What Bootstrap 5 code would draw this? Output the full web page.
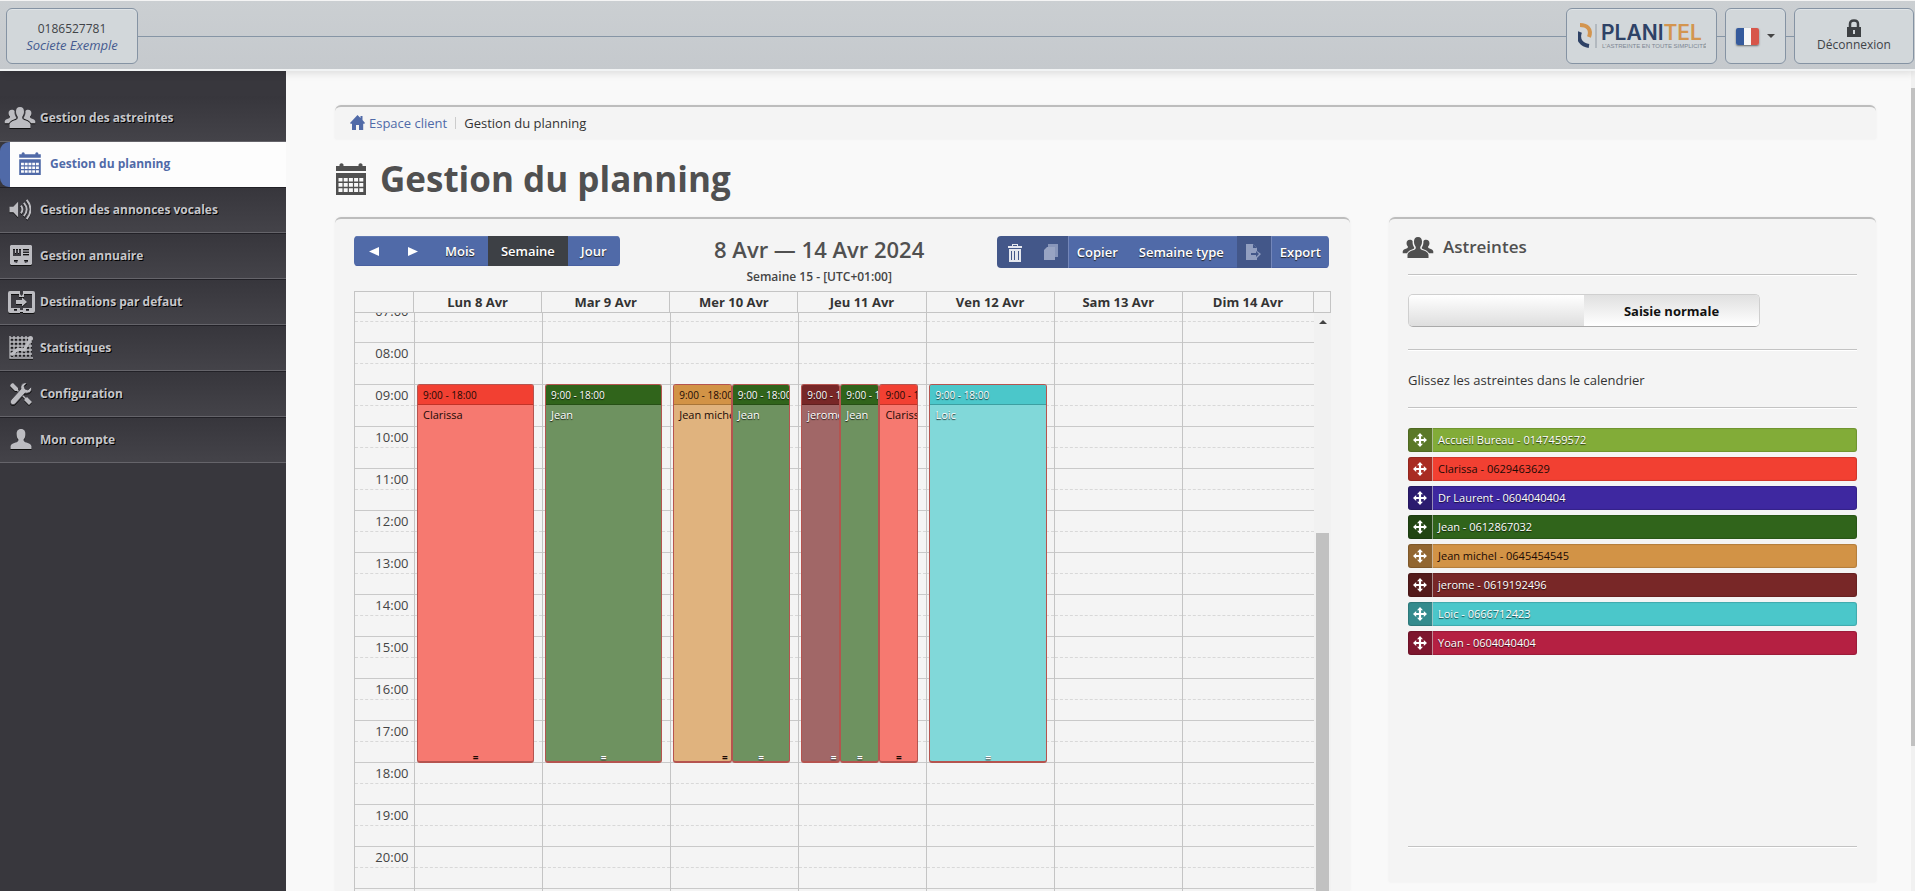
<!DOCTYPE html>
<html lang="fr">
<head>
<meta charset="utf-8">
<meta name="viewport" content="width=device-width, initial-scale=1">
<title>Gestion du planning</title>
<link href="https://cdn.jsdelivr.net/npm/bootstrap@5.3.0/dist/css/bootstrap.min.css" rel="stylesheet">
<style>
:root{--blue:#506aa8;--ink:#505050;--rule:#cbcbcb}
body{font-family:"Open Sans","Noto Sans",sans-serif;font-size:13px;line-height:20px;color:#333;background:#f9f9f9}
a{text-decoration:none}
.topbar{height:71px;padding:8px 1px 6px 6px;background:linear-gradient(#cbcfd2,#c5c9cd);border-top:1px solid #f4f4f4;border-bottom:2px solid #f1f3f4;box-shadow:0 2px 8px rgba(0,0,0,.12);z-index:2}
.topbar .wire{height:1px;background:#8695a5}
.topbar .gap-wire{width:8px}
.plate{height:56px;border:1px solid #8593a3;border-radius:6px;background:#d2d7da;color:#404347;box-shadow:inset 0 1px 0 #dfe4e7}
.plate-account{width:132px;font-size:12px;line-height:17px;padding-top:1px}
.plate-account em{color:#455b90;font-size:13px}
.plate-logo{width:151px}
.plate-flag{width:61px}
.plate-exit{width:120px;font-size:12px;line-height:16px}
.flag{width:23px;height:17px;border-radius:2px;box-shadow:0 1px 2px rgba(0,0,0,.5)}
.side{width:286px;background:#38373d;padding-top:25px}
.side .nav-link{height:46px;padding:0 0 0 4px;gap:3px;color:#c6c6ca;font-size:12px;font-weight:700;text-shadow:1px 1px 0 #000;background:linear-gradient(#37363c,#444349);border-top:1px solid #222127;border-bottom:1px solid #65646a;border-radius:0}
.side .nav-link svg{width:33px;height:26px;fill:#bcbcc1;filter:drop-shadow(0 1px 0 #111)}
.side li:first-child .nav-link{border-top:0;padding-bottom:2px}
.side .nav-link.active{height:45px;color:var(--blue);text-shadow:none;border:0;padding:0 0 1px 14px;background:linear-gradient(90deg,transparent 10px,#fdfdfd 10px),#38373d;position:relative}
.side .nav-link.active::before{content:"";position:absolute;left:0;top:0;width:10px;height:100%;background:#506aa8;border-radius:9px 0 0 9px}
.side .nav-link.active svg{fill:var(--blue);filter:none}
.content{padding:34px 39px 0 49px;min-width:0}
.box{background:#f4f4f4;border-top:2px solid #bdbdbd;border-radius:6px 6px 0 0;box-shadow:0 0 3px rgba(0,0,0,.05)}
.crumbs{height:34px;padding:0 15px 1px}
.crumbs a{color:var(--blue)}
.crumbs .sep{width:1px;height:12px;background:#ccc;margin:0 8px}
h1{font-size:35px;line-height:48px;font-weight:700;color:var(--ink);margin:0}
.pagehead{padding:2px 0 0 1px;gap:14px;height:78px}
.columns{display:grid;grid-template-columns:minmax(0,1015fr) minmax(0,487fr);gap:39px;min-height:0}
.cal{padding:17px 19px 0;min-height:0}
.tools{height:55px;padding-right:2px}
.tools .btn-group{gap:1px;background:#fff;border-radius:4px;overflow:hidden}
.tools .btn-group>.btn{flex:none;margin:0;height:30px;padding:0 13px;border:0;border-radius:0;background:var(--blue);color:#fff;line-height:20px;text-shadow:0 1px 1px #222;box-shadow:inset 0 1px 0 #6179b2,inset 0 -1px 0 #4960a0;font-size:13px;font-weight:600}
.tools .btn-group>.arrow{width:39px;padding:0 0 2px}
.tools .btn-group>.btn.active{background:#3d4045;box-shadow:none}
.tools .tall>.btn{height:32px}
.tools .tall>.with-icon{padding:0 8px 0 0;overflow:hidden}
.tools .glyph{width:35px;height:32px;background:#435789;border-right:1px solid #7386b9;margin-right:8px;display:flex;align-items:center;justify-content:center}
.tools .tall>.trash{padding:0;width:37px;background:#435789;box-shadow:none}
.headline{padding-left:22px}
.week{font-size:22px;line-height:24px;font-weight:600;color:var(--ink);margin:1px 0 9px}
.weekno{font-size:12px;line-height:14px;font-weight:600;color:#444}
.grid-head,.slots{table-layout:fixed;width:100%;border-collapse:collapse}
.grid-head{border:1px solid #c4c4c4}
.grid-head th{height:21px;font-size:13px;line-height:18px;font-weight:700;text-align:center;padding:0;border:1px solid #c4c4c4;color:#333}
.c-time{width:59px}
.c-day{width:13.36%}
.c-headday{width:13.13%}
.c-bar{width:17px}
.grid-body{min-height:0;flex:1 1 0}
.scroller{overflow:hidden;border-left:1px solid #c4c4c4}
.track{position:relative;margin-top:-13px}
.slots td,.slots th{height:21px;padding:0;border-right:1px solid #c4c4c4;border-top:1px solid #c9c9c9;line-height:20px;font-weight:400;font-size:13px;color:#444}
.slots tr.half>*{border-top:1px dashed #d8d8d8}
.slots th{text-align:right;padding-right:5px}
.slots tr>:last-child{border-right:0}
.events{position:absolute;inset:0 0 auto 0;display:grid;grid-template-columns:59px repeat(6,13.36%) 1fr;padding-top:84px}
.day{display:flex;padding:0 8px 0 3px;min-width:0}
.event{flex:1 1 0;min-width:0;height:379px;border:1px solid #b5544f;border-bottom-width:2px;border-radius:3px;background:var(--soft);color:#fff;font-size:11px;line-height:16px;text-shadow:0 1px 1px rgba(0,0,0,.8);white-space:nowrap;overflow:hidden}
.event header{background:var(--c);height:20px;font-size:10px;line-height:21px;padding-left:5px;border-bottom:1px solid rgba(0,0,0,.2);overflow:hidden}
.event p{margin:2px 0 0;padding-left:5px;overflow:hidden}
.event .grip{margin-top:auto;text-align:center;font-size:10px;line-height:8px;font-weight:700}
.event.under .grip{text-align:right;padding-right:3px}
.dark-ink,.event.dark-ink{color:#1a0a05;text-shadow:none}
.green{--c:#30641b;--soft:#6e9260}
.red{--c:#f24032;--soft:#f67970}
.sand{--c:#d29346;--soft:#e0b37e}
.maroon{--c:#782727;--soft:#a16767}
.cyan{--c:#4bc7ca;--soft:#81d8d9}
.lime{--c:#82ac38}
.violet{--c:#3e28a0}
.crimson{--c:#b52042}
.inner-bar{width:17px;padding:7px 2px 0 2px;background:#f1f1f1}
.inner-bar .up{border:4px solid transparent;border-top:0;border-bottom-color:#444;margin:0 auto}
.inner-bar .thumb{background:#c1c1c1;margin-top:209px}
.oncall{padding:15px 19px 34px;height:665px}
.oncall-title{gap:9px;padding-bottom:14px;margin-left:-6px}
.oncall h2{font-size:17px;line-height:26px;font-weight:600;color:var(--ink);margin:0}
.oncall hr{margin:0;border:0;border-top:1px solid #c3c3c3;border-bottom:1px solid #fff;opacity:1;flex:none}
.oncall .hint{padding:19px 0 17px;margin:0}
.switch{width:352px;height:33px;border:1px solid #cfcfcf;border-bottom-color:#aaa;border-radius:5px;overflow:hidden;margin:18px 0 22px;max-width:100%}
.switch label{flex:1;font-weight:700;line-height:32px;text-align:center;color:#111;background:linear-gradient(#fff,#dedede)}
.switch input:checked+label{background:linear-gradient(#e0e0e0,#fff)}
.people{padding-top:19px}
.people li{height:24px;margin-bottom:5px;border-radius:3px;background:var(--c);color:#fff;font-size:11px;line-height:23px;text-shadow:0 1px 1px rgba(0,0,0,.7);box-shadow:inset 0 0 1px 1px rgba(0,0,0,.15);overflow:hidden}
.people li.dark-ink{color:#1a0a05;text-shadow:none}
.people .handle{width:25px;background:rgba(0,0,0,.3);border-right:1px solid rgba(255,255,255,.5);margin-right:5px}
.page-bar{width:4px;background:#f1f1f1;position:absolute;right:0;top:71px;bottom:0;padding-top:17px}
.page-bar div{height:82%;background:#c1c1c1}
</style>
</head>
<body class="vh-100 overflow-hidden d-flex flex-column position-relative">
<svg class="d-none" aria-hidden="true">
  <symbol id="i-group" viewBox="0 0 32 22"><path d="M16 0c3 0 4.300 2 4.200 5 0 2.600-1 4-1.700 5.200-.5 1.300 0 2.400 1.500 3.100 3 1.300 6.500 2 7 5.200V22H5v-3.500c.5-3.200 4-3.900 7-5.200 1.500-.7 2-1.800 1.500-3.100C12.800 9 11.800 7.600 11.800 5c-.1-3 1.200-5 4.200-5z"/><path d="M7.500 3c1.200 0 2.300.4 2.800 1.300-.1 3 .5 5 1.700 6.600.2.800-.1 1.300-1 1.700-2.600 1-5 2-6.600 4.300L0 17v-2c.5-2 3-2.500 4.600-3.200.9-.5 1.100-1.300.6-2C4.600 9 4 8 4 6.500 4 4.500 5.200 3 7.500 3zM24.500 3c-1.200 0-2.300.4-2.800 1.300.1 3-.5 5-1.700 6.600-.2.800.1 1.300 1 1.700 2.600 1 5 2 6.600 4.300L32 17v-2c-.5-2-3-2.500-4.600-3.200-.9-.5-1.100-1.300-.6-2 .6-.8 1.200-1.800 1.200-3.300 0-2-1.200-3.500-3.500-3.500z"/></symbol>
  <symbol id="i-cal" viewBox="0 0 30 32"><path d="M0 3h3.500V1.500Q5.500-1 7.500 1.500V3h15V1.500q2-2.500 4 0V3H30v5H0zM0 10h30v22H0zM2.500 15v3.500h4V15zm5.200 0v3.500h4V15zm5.200 0v3.500h4V15zm5.200 0v3.500h4V15zm5.200 0v3.500h4V15zM2.500 20v3.800h4V20zm5.200 0v3.800h4V20zm5.200 0v3.800h4V20zm5.200 0v3.800h4V20zm5.200 0v3.800h4V20zM2.500 25.300V29h4v-3.700zm5.200 0V29h4v-3.700zm5.200 0V29h4v-3.700zm5.200 0V29h4v-3.700zm5.200 0V29h4v-3.700z" fill-rule="evenodd"/></symbol>
  <symbol id="i-sound" viewBox="0 0 22 22"><path d="M0 8h4l5-5v16l-5-5H0z"/><path d="M12 7q3 4 0 8M15 4q6 7 0 14M18 1q8 10 0 20" fill="none" stroke="#bcbcc1" stroke-width="2"/></symbol>
  <symbol id="i-book" viewBox="0 0 22 20"><path fill-rule="evenodd" d="M1 0h20l1 1v18l-1 1H1l-1-1V1zM3 4v7h8V4H9v4H8V4H6v4H5V4zm10 0v1.500h6V4zm0 2.500V8h6V6.500zm0 2.500v1.500h6V9zM4 15v2l3 1 1-3zm10 0l1 3 3-1v-2z"/></symbol>
  <symbol id="i-dest" viewBox="0 0 27 22"><path fill-rule="evenodd" d="M2 0h10v3H3v14h9v2h3v-2h9V3h-9V0h10q2 0 2 2v18q0 2-2 2H15v-1h-3v1H2q-2 0-2-2V2q0-2 2-2zM6 18v2h3v-2zm12 0v2h3v-2z"/><path d="M11 2l2.500 3L16 2v4h-5zM8 9h6V6.500l5 4.500-5 4.500V13H8z"/></symbol>
  <symbol id="i-stat" viewBox="0 0 24 23"><path d="M1 0v22h23M5 0v21M9 0v21M13 0v21M17 0v21M21 3v18M1 2h20M1 6h22M1 10h22M1 14h22M1 18h22" fill="none" stroke="#bcbcc1" stroke-width="1.400"/><path d="M2 19l7-6 6 1 6-10" fill="none" stroke="#bcbcc1" stroke-width="3"/><circle cx="21.500" cy="2.500" r="2.500"/></symbol>
  <symbol id="i-tools" viewBox="0 0 22 22"><path d="M1 1l2-1 5 5v2l8 8 1-1 5 5-3 3-5-5 1-1-8-8H5L0 3z"/><path d="M21 4l-3 3-3-1-1-3 3-3c-4-1-7 2-6 6L1 17c-2 3 1 6 4 4L15 10c4 1 8-2 6-6z" stroke="#3c3b41" stroke-width=".8"/></symbol>
  <symbol id="i-user" viewBox="0 0 22 21"><path d="M11 0c3.500 0 4.800 2.500 4.600 6 0 2.500-1 4-1.900 5 0 2 1 2.600 3 3.300 3 1 5 1.700 5.300 4V21H0v-2.700c.3-2.300 2.300-3 5.300-4 2-.7 3-1.300 3-3.300-.9-1-1.900-2.500-1.900-5C6.200 2.500 7.500 0 11 0z"/></symbol>
  <symbol id="i-move" viewBox="0 0 14 14"><path d="M7 0l3 3.200H8.100v2.700h2.700V4L14 7l-3.200 3V8.100H8.100v2.700H10L7 14l-3-3.200h1.900V8.100H3.200V10L0 7l3.200-3v1.900h2.700V3.200H4z"/></symbol>
</svg>

<header class="topbar d-flex align-items-center position-relative flex-shrink-0">
  <div class="plate plate-account d-flex flex-column justify-content-center text-center"><span>0186527781</span><em>Societe Exemple</em></div>
  <div class="wire flex-fill"></div>
  <a href="#" class="plate plate-logo d-flex align-items-center justify-content-center" aria-label="Planitel">
    <svg width="128" height="30" viewBox="0 0 128 30">
      <path d="M2 4c7 0 12 4 9 12" fill="none" stroke="#d3954f" stroke-width="4"/><path d="M2 11c-3 8 2 13 9 14" fill="none" stroke="#2e4266" stroke-width="4"/>
      <path d="M18 3v24" stroke="#929aa4"/>
      <text x="23" y="19" font-family="Inter,sans-serif" font-weight="600" font-size="21" fill="#2e4266">PLANI<tspan fill="#d3954f">TEL</tspan></text>
      <text x="24" y="27" font-family="Liberation Sans,sans-serif" font-size="6" fill="#7d8692">L'ASTREINTE EN TOUTE SIMPLICITÉ</text>
    </svg>
  </a>
  <div class="wire gap-wire"></div>
  <button class="plate plate-flag d-flex align-items-center justify-content-center gap-2 p-0" type="button" aria-label="Langue : français">
    <svg class="flag" viewBox="0 0 23 17"><path fill="#355a9c" d="M0 0h8v17H0z"/><path fill="#f7f7f7" d="M8 0h7v17H8z"/><path fill="#d7564a" d="M15 0h8v17h-8z"/></svg>
    <svg width="8" height="4" viewBox="0 0 8 4"><path fill="#444" d="M0 0h8L4 4z"/></svg>
  </button>
  <div class="wire gap-wire"></div>
  <a href="#" class="plate plate-exit d-flex flex-column align-items-center justify-content-center">
    <svg width="14" height="18" viewBox="0 0 14 18"><path fill="none" stroke="#3d4043" stroke-width="2.500" d="M3 9V5q0-3.500 4-3.500T11 5v4"/><path fill="#3d4043" fill-rule="evenodd" d="M0 8h14v10H0zm6 3v4h2v-4z"/></svg>
    <span>Déconnexion</span>
  </a>
</header>

<div class="d-flex flex-fill overflow-hidden">
  <nav class="side flex-shrink-0" aria-label="Menu principal">
    <ul class="nav flex-column">
      <li><a class="nav-link d-flex align-items-center" href="#"><svg><use href="#i-group" width="32" height="21" y="2"/></svg>Gestion des astreintes</a></li>
      <li><a class="nav-link active d-flex align-items-center" aria-current="page" href="#"><svg><use href="#i-cal" x="5" y="1" width="22" height="23"/></svg>Gestion du planning</a></li>
      <li><a class="nav-link d-flex align-items-center" href="#"><svg><use href="#i-sound" x="5" y="2" width="22" height="21"/></svg>Gestion des annonces vocales</a></li>
      <li><a class="nav-link d-flex align-items-center" href="#"><svg><use href="#i-book" x="6" y="2" width="22" height="20"/></svg>Gestion annuaire</a></li>
      <li><a class="nav-link d-flex align-items-center" href="#"><svg><use href="#i-dest" x="4" y="2" width="27" height="22"/></svg>Destinations par defaut</a></li>
      <li><a class="nav-link d-flex align-items-center" href="#"><svg><use href="#i-stat" x="5" y="1" width="24" height="23"/></svg>Statistiques</a></li>
      <li><a class="nav-link d-flex align-items-center" href="#"><svg><use href="#i-tools" x="6" y="2" width="22" height="22"/></svg>Configuration</a></li>
      <li><a class="nav-link d-flex align-items-center" href="#"><svg><use href="#i-user" x="6" y="2" width="22" height="20"/></svg>Mon compte</a></li>
    </ul>
  </nav>

  <main class="content flex-fill d-flex flex-column">
    <nav class="box crumbs d-flex align-items-center flex-shrink-0" aria-label="Fil d'Ariane">
      <svg width="15" height="15" viewBox="0 0 15 15" class="me-1"><path fill="#506aa8" d="M7.500 0l3 3V1h2v4L15 8l-1 1-.800-.5V15H9v-5H6v5H2V8.500L1 9 0 8z"/></svg>
      <a href="#">Espace client</a><span class="sep"></span><span>Gestion du planning</span>
    </nav>
    <div class="pagehead d-flex align-items-center flex-shrink-0">
      <svg width="30" height="32" fill="#505050"><use href="#i-cal" width="30" height="32"/></svg>
      <h1>Gestion du planning</h1>
    </div>

    <div class="columns flex-fill">
      <section class="box cal d-flex flex-column">
        <div class="tools d-flex align-items-start flex-shrink-0">
          <div class="btn-group">
            <button type="button" class="btn arrow" aria-label="Précédent"><svg width="10" height="9" viewBox="0 0 10 9"><path fill="#fff" d="M10 0v9L0 4.500z"/></svg></button>
            <button type="button" class="btn arrow" aria-label="Suivant"><svg width="10" height="9" viewBox="0 0 10 9"><path fill="#fff" d="M0 0v9l10-4.500z"/></svg></button>
            <button type="button" class="btn">Mois</button>
            <button type="button" class="btn active">Semaine</button>
            <button type="button" class="btn">Jour</button>
          </div>
          <div class="headline text-center flex-fill"><h2 class="week">8 Avr — 14 Avr 2024</h2><div class="weekno">Semaine 15 - [UTC+01:00]</div></div>
          <div class="btn-group tall">
            <button type="button" class="btn trash" aria-label="Supprimer"><svg width="14" height="18" viewBox="0 0 14 18"><path fill="#e4e7ee" fill-rule="evenodd" d="M0 2h4V0h6v2h4v2H0zm5-1v1h4V1zM1 5h12v13H1zm2 2v9h1V7zm3 0v9h1V7zm4 0v9h1V7z"/></svg></button>
            <button type="button" class="btn with-icon d-flex align-items-center"><span class="glyph"><svg width="14" height="16" viewBox="0 0 14 16"><path fill="#8896ba" d="M4 0h10v13H4z"/><path fill="#98a4c3" d="M3 3h8v13H0V6z"/></svg></span>Copier</button>
            <button type="button" class="btn">Semaine type</button>
            <button type="button" class="btn with-icon d-flex align-items-center"><span class="glyph"><svg width="15" height="16" viewBox="0 0 15 16"><path fill="#929fc0" d="M0 0h7l4 4v3l4 3-4 4v2H0z"/><path fill="#435789" d="M7 0v4h4M5 9h5V7l3 3-3 3v-2H5z"/></svg></span>Export</button>
          </div>
        </div>

        <table class="grid-head flex-shrink-0">
          <colgroup><col class="c-time"><col span="6" class="c-headday"><col><col class="c-bar"></colgroup>
          <thead><tr><th></th><th scope="col">Lun 8 Avr</th><th scope="col">Mar 9 Avr</th><th scope="col">Mer 10 Avr</th><th scope="col">Jeu 11 Avr</th><th scope="col">Ven 12 Avr</th><th scope="col">Sam 13 Avr</th><th scope="col">Dim 14 Avr</th><th></th></tr></thead>
        </table>
        <div class="grid-body d-flex">
          <div class="scroller flex-fill">
            <div class="track">
              <table class="slots">
                <colgroup><col class="c-time"><col span="6" class="c-day"><col></colgroup>
                <tbody id="slots"></tbody>
              </table>
              <div class="events">
                <span></span>
                <div class="day">
                  <article class="event red dark-ink d-flex flex-column"><header>9:00 - 18:00</header><p>Clarissa</p><span class="grip">=</span></article>
                </div>
                <div class="day">
                  <article class="event green d-flex flex-column"><header>9:00 - 18:00</header><p>Jean</p><span class="grip">=</span></article>
                </div>
                <div class="day">
                  <article class="event sand dark-ink under d-flex flex-column"><header>9:00 - 18:00</header><p>Jean michel</p><span class="grip">=</span></article>
                  <article class="event green d-flex flex-column"><header>9:00 - 18:00</header><p>Jean</p><span class="grip">=</span></article>
                </div>
                <div class="day">
                  <article class="event maroon under d-flex flex-column"><header>9:00 - 18:00</header><p>jerome</p><span class="grip">=</span></article>
                  <article class="event green d-flex flex-column"><header>9:00 - 18:00</header><p>Jean</p><span class="grip">=</span></article>
                  <article class="event red dark-ink d-flex flex-column"><header>9:00 - 18:00</header><p>Clarissa</p><span class="grip">=</span></article>
                </div>
                <div class="day">
                  <article class="event cyan d-flex flex-column"><header>9:00 - 18:00</header><p>Loic</p><span class="grip">=</span></article>
                </div>
              </div>
            </div>
          </div>
          <div class="inner-bar d-flex flex-column flex-shrink-0" aria-hidden="true"><div class="up"></div><div class="thumb flex-fill"></div></div>
        </div>
      </section>

      <aside class="box oncall d-flex flex-column">
        <div class="oncall-title d-flex align-items-center flex-shrink-0">
          <svg width="32" height="21" fill="#505050"><use href="#i-group" width="32" height="21"/></svg>
          <h2>Astreintes</h2>
        </div>
        <hr>
        <div class="switch d-flex flex-shrink-0">
          <input class="visually-hidden" type="radio" name="saisie" id="saisie-vide"><label for="saisie-vide" aria-label="Autre saisie"></label>
          <input class="visually-hidden" type="radio" name="saisie" id="saisie-normale" checked><label for="saisie-normale">Saisie normale</label>
        </div>
        <hr>
        <p class="hint flex-shrink-0">Glissez les astreintes dans le calendrier</p>
        <hr>
        <ul class="people list-unstyled flex-fill m-0">
          <li class="lime d-flex"><span class="handle d-flex align-items-center justify-content-center"><svg width="14" height="14" fill="#fff"><use href="#i-move"/></svg></span>Accueil Bureau - 0147459572</li>
          <li class="red dark-ink d-flex"><span class="handle d-flex align-items-center justify-content-center"><svg width="14" height="14" fill="#fff"><use href="#i-move"/></svg></span>Clarissa - 0629463629</li>
          <li class="violet d-flex"><span class="handle d-flex align-items-center justify-content-center"><svg width="14" height="14" fill="#fff"><use href="#i-move"/></svg></span>Dr Laurent - 0604040404</li>
          <li class="green d-flex"><span class="handle d-flex align-items-center justify-content-center"><svg width="14" height="14" fill="#fff"><use href="#i-move"/></svg></span>Jean - 0612867032</li>
          <li class="sand dark-ink d-flex"><span class="handle d-flex align-items-center justify-content-center"><svg width="14" height="14" fill="#fff"><use href="#i-move"/></svg></span>Jean michel - 0645454545</li>
          <li class="maroon d-flex"><span class="handle d-flex align-items-center justify-content-center"><svg width="14" height="14" fill="#fff"><use href="#i-move"/></svg></span>jerome - 0619192496</li>
          <li class="cyan d-flex"><span class="handle d-flex align-items-center justify-content-center"><svg width="14" height="14" fill="#fff"><use href="#i-move"/></svg></span>Loic - 0666712423</li>
          <li class="crimson d-flex"><span class="handle d-flex align-items-center justify-content-center"><svg width="14" height="14" fill="#fff"><use href="#i-move"/></svg></span>Yoan - 0604040404</li>
        </ul>
        <hr>
      </aside>
    </div>
  </main>
</div>
<div class="page-bar" aria-hidden="true"><div></div></div>

<script src="https://cdn.jsdelivr.net/npm/bootstrap@5.3.0/dist/js/bootstrap.bundle.min.js"></script>
<script>
// One full row and one half-hour row for each hour of the visible range.
const slots = document.getElementById('slots');
const cells = '<td></td>'.repeat(7);
for (let h = 7; h < 21; h++) {
  const label = String(h).padStart(2, '0') + ':00';
  slots.insertAdjacentHTML('beforeend',
    `<tr><th scope="row">${label}</th>${cells}</tr><tr class="half"><th></th>${cells}</tr>`);
}
slots.insertAdjacentHTML('beforeend', `<tr><th></th>${cells}</tr>`);
</script>
</body>
</html>
